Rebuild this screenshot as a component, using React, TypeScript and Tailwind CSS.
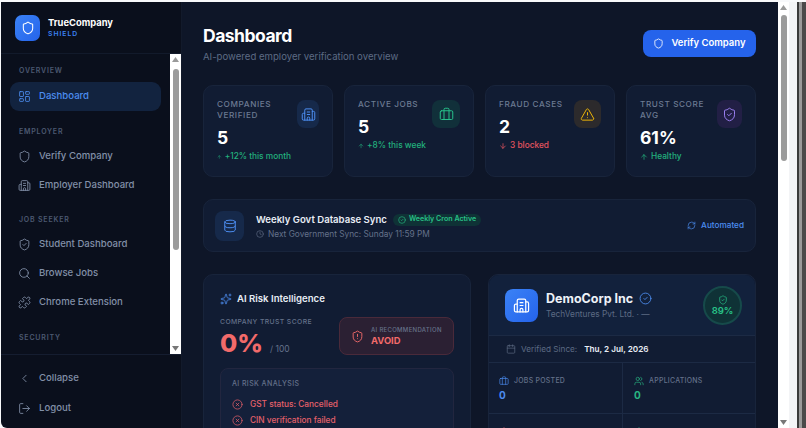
import React from "react";
import {
  ArrowDown,
  ArrowUp,
  Briefcase,
  Building2,
  Calendar,
  ChevronLeft,
  CircleCheck,
  CircleX,
  Clock,
  Database,
  LayoutDashboard,
  LogOut,
  Puzzle,
  RefreshCw,
  Search,
  Shield,
  ShieldAlert,
  ShieldCheck,
  Sparkles,
  TriangleAlert,
  Users,
} from "lucide-react";

const Scrollbar = ({ thumbClass }: { thumbClass: string }) => (
  <div className="flex h-full w-[11px] shrink-0 flex-col items-center bg-white">
    <svg width="9" height="12" viewBox="0 0 9 12" className="shrink-0">
      <path d="M4.5 3 L8 8 L1 8 Z" fill="#9a9a9a" />
    </svg>
    <div className="min-h-0 flex-1">
      <div className={`w-[6px] rounded-full bg-[#9b9b9b] ${thumbClass}`} />
    </div>
    <svg width="9" height="12" viewBox="0 0 9 12" className="shrink-0">
      <path d="M1 4 L8 4 L4.5 9 Z" fill="#777777" />
    </svg>
  </div>
);

const NavLabel = ({ children, className = "" }: { children: React.ReactNode; className?: string }) => (
  <div className={`px-[18px] text-[7px] font-semibold leading-[10px] tracking-[0.8px] text-[#4c5971] ${className}`}>
    {children}
  </div>
);

const NavItem = ({ icon: Icon, label, active = false }: { icon: React.ElementType; label: string; active?: boolean }) => (
  <div
    className={`mx-[9px] flex h-[29px] items-center gap-[8px] rounded-[9px] px-[8px] text-[9.6px] font-medium ${
      active ? "bg-[#12233f] text-[#4c8df0]" : "text-[#8290a8]"
    }`}
  >
    <Icon size={13} strokeWidth={1.6} className="shrink-0" />
    <span>{label}</span>
  </div>
);

const Sidebar = () => (
  <aside className="flex h-full w-[180px] shrink-0 flex-col rounded-bl-[6px] bg-[#0a0f1c]">
    <div className="flex h-[52px] shrink-0 items-center gap-[8px] border-b border-[#121a2b] px-[14px]">
      <div className="flex h-[26px] w-[25px] items-center justify-center rounded-[7px] bg-gradient-to-br from-[#3b82f6] to-[#2563eb]">
        <Shield size={14} strokeWidth={1.8} className="text-white" />
      </div>
      <div>
        <div className="text-[9.4px] font-bold leading-[12px] text-white">TrueCompany</div>
        <div className="text-[6.8px] font-semibold leading-[9px] tracking-[1px] text-[#3b82f6]">SHIELD</div>
      </div>
    </div>
    <div className="flex min-h-0 flex-1">
      <nav className="min-w-0 flex-1 overflow-hidden pt-[12px]">
        <NavLabel>OVERVIEW</NavLabel>
        <div className="mt-[6px]">
          <NavItem icon={LayoutDashboard} label="Dashboard" active />
        </div>
        <NavLabel className="mt-[16px]">EMPLOYER</NavLabel>
        <div className="mt-[5px]">
          <NavItem icon={Shield} label="Verify Company" />
          <NavItem icon={Building2} label="Employer Dashboard" />
        </div>
        <NavLabel className="mt-[15px]">JOB SEEKER</NavLabel>
        <div className="mt-[5px]">
          <NavItem icon={ShieldCheck} label="Student Dashboard" />
          <NavItem icon={Search} label="Browse Jobs" />
          <NavItem icon={Puzzle} label="Chrome Extension" />
        </div>
        <NavLabel className="mt-[16px]">SECURITY</NavLabel>
      </nav>
      <Scrollbar thumbClass="mt-[3px] h-[181px]" />
    </div>
    <div className="h-[74px] shrink-0 border-t border-[#151d30] pt-[9px]">
      <NavItem icon={ChevronLeft} label="Collapse" />
      <div className="h-[1px]" />
      <NavItem icon={LogOut} label="Logout" />
    </div>
  </aside>
);

const stats = [
  { label: "COMPANIES VERIFIED", value: "5", note: "+12% this month", icon: Building2, tone: "w-[22px] bg-[#16294a] text-[#4c8df0]", down: false },
  { label: "ACTIVE JOBS", value: "5", note: "+8% this week", icon: Briefcase, tone: "w-[28px] bg-[#11303a] text-[#27c08a]", down: false },
  { label: "FRAUD CASES", value: "2", note: "3 blocked", icon: TriangleAlert, tone: "w-[27px] bg-[#2c2a2c] text-[#eab308]", down: true },
  { label: "TRUST SCORE AVG", value: "61%", note: "Healthy", icon: ShieldCheck, tone: "w-[25px] bg-[#221f45] text-[#9a7ff0]", down: false },
];

const StatCard = ({ stat }: { stat: (typeof stats)[number] }) => {
  const Icon = stat.icon;
  const Arrow = stat.down ? ArrowDown : ArrowUp;
  return (
    <div className="flex h-[92px] items-start justify-between gap-[6px] rounded-[10px] border border-[#18243b] bg-[#111c33] px-[13px] pt-[13px]">
      <div className="min-w-0">
        <div className="text-[8.2px] font-medium leading-[11px] tracking-[0.6px] text-[#6c7a92]">{stat.label}</div>
        <div className="mt-[6px] text-[17.5px] font-bold leading-[22px] text-white">{stat.value}</div>
        <div className={`mt-[2px] flex items-center gap-[3px] whitespace-nowrap text-[8.3px] font-medium leading-[11px] ${stat.down ? "text-[#e5545f]" : "text-[#22b07d]"}`}>
          <Arrow size={8} strokeWidth={2.2} />
          <span>{stat.note}</span>
        </div>
      </div>
      <div className={`mt-[1px] flex h-[28px] shrink-0 items-center justify-center rounded-[8px] ${stat.tone}`}>
        <Icon size={15} strokeWidth={1.6} />
      </div>
    </div>
  );
};

const SyncCard = () => (
  <div className="mt-[22px] flex h-[53px] shrink-0 items-center justify-between rounded-[10px] border border-[#18243b] bg-[#111c33] px-[11px]">
    <div className="flex items-center gap-[12px]">
      <div className="flex h-[30px] w-[29px] items-center justify-center rounded-[8px] bg-[#16294a] text-[#4c8df0]">
        <Database size={14} strokeWidth={1.7} />
      </div>
      <div className="pt-[1px]">
        <div className="flex items-center gap-[6px]">
          <span className="text-[9.6px] font-semibold leading-[14px] text-[#e8edf5]">Weekly Govt Database Sync</span>
          <span className="flex h-[12px] items-center gap-[3px] rounded-full bg-[#0f3236] px-[5px] text-[7.1px] font-semibold text-[#28c187]">
            <CircleCheck size={8} strokeWidth={1.8} />
            Weekly Cron Active
          </span>
        </div>
        <div className="mt-[1px] flex items-center gap-[4px] text-[8.3px] leading-[12px] text-[#64718a]">
          <Clock size={8} strokeWidth={1.8} />
          Next Government Sync: Sunday 11:59 PM
        </div>
      </div>
    </div>
    <div className="flex items-center gap-[5px] text-[8.2px] font-medium text-[#4c8df0]">
      <RefreshCw size={9} strokeWidth={1.8} />
      Automated
    </div>
  </div>
);

const RiskCard = () => (
  <div className="min-w-0 flex-1 rounded-[10px] border border-[#18243b] bg-[#111c33] px-[16px] pb-[20px] pt-[17px]">
    <div className="flex items-center gap-[5px] text-[9.6px] font-semibold leading-[14px] text-[#e8edf5]">
      <Sparkles size={12} strokeWidth={1.6} className="text-[#4c8df0]" />
      AI Risk Intelligence
    </div>
    <div className="mt-[11px] flex items-start justify-between">
      <div>
        <div className="text-[6.8px] font-medium leading-[10px] tracking-[0.4px] text-[#64718a]">COMPANY TRUST SCORE</div>
        <div className="flex items-baseline gap-[7px]">
          <span className="text-[25px] font-extrabold leading-[32px] text-[#f26a6a]">0%</span>
          <span className="text-[8.5px] text-[#64718a]">/ 100</span>
        </div>
      </div>
      <div className="flex h-[38px] w-[115px] items-center gap-[7px] rounded-[8px] border border-[#4a2a3a] bg-[#2b2033] px-[11px]">
        <ShieldAlert size={13} strokeWidth={1.7} className="shrink-0 text-[#f26a6a]" />
        <div>
          <div className="whitespace-nowrap text-[6px] font-medium leading-[9px] tracking-[0.3px] text-[#66728a]">AI RECOMMENDATION</div>
          <div className="mt-[1px] text-[9.4px] font-bold leading-[12px] text-[#f26a6a]">AVOID</div>
        </div>
      </div>
    </div>
    <div className="mt-[9px] rounded-[8px] border border-[#22263f] bg-[#14203a] px-[11px] pb-[12px] pt-[10px]">
      <div className="text-[7px] font-medium leading-[10px] tracking-[0.4px] text-[#64718a]">AI RISK ANALYSIS</div>
      <div className="mt-[8px] flex items-center gap-[7px] text-[8.3px] font-medium leading-[14px] text-[#e5606a]">
        <CircleX size={11} strokeWidth={1.6} />
        GST status: Cancelled
      </div>
      <div className="mt-[2px] flex items-center gap-[7px] text-[8.3px] font-medium leading-[14px] text-[#e5606a]">
        <CircleX size={11} strokeWidth={1.6} />
        CIN verification failed
      </div>
    </div>
  </div>
);

const Metric = ({ icon: Icon, label, value, tone, border = false }: { icon: React.ElementType; label: string; value: string; tone: string; border?: boolean }) => (
  <div className={`h-[50px] px-[10px] pt-[13px] ${border ? "border-l border-[#1c2a44] pl-[11px]" : ""}`}>
    <div className="flex items-center gap-[5px] text-[6.9px] font-medium leading-[10px] tracking-[0.3px] text-[#64718a]">
      <Icon size={10} strokeWidth={1.6} className={tone} />
      {label}
    </div>
    <div className={`mt-[2px] text-[10px] font-bold leading-[14px] ${tone}`}>{value}</div>
  </div>
);

const CompanyCard = () => (
  <div className="w-[268px] shrink-0 rounded-[10px] border border-[#18243b] bg-[#111c33]">
    <div className="flex h-[60px] items-center justify-between rounded-t-[10px] bg-[#12213c] pl-[16px] pr-[13px]">
      <div className="flex items-center gap-[8px]">
        <div className="flex h-[33px] w-[33px] items-center justify-center rounded-[8px] bg-gradient-to-br from-[#3b82f6] to-[#2563eb] text-white">
          <Building2 size={17} strokeWidth={1.7} />
        </div>
        <div>
          <div className="flex items-center gap-[6px] text-[12.5px] font-bold leading-[16px] text-[#eef2f8]">
            DemoCorp Inc
            <CircleCheck size={13} strokeWidth={1.6} className="text-[#4c8df0]" />
          </div>
          <div className="mt-[1px] text-[8.3px] leading-[12px] text-[#5d6b84]">TechVentures Pvt. Ltd. · —</div>
        </div>
      </div>
      <div className="flex h-[39px] w-[39px] flex-col items-center justify-center rounded-full border-2 border-[#164a4a] bg-[#0f3236] text-[#28c187]">
        <ShieldCheck size={10} strokeWidth={1.7} />
        <div className="text-[9.5px] font-semibold leading-[11px]">89%</div>
      </div>
    </div>
    <div className="flex h-[28px] items-center gap-[5px] border-y border-[#1c2a44] pl-[17px] text-[8.2px]">
      <Calendar size={10} strokeWidth={1.6} className="text-[#5d6b84]" />
      <span className="mr-[2px] text-[#5d6b84]">Verified Since:</span>
      <span className="font-semibold text-[#e8edf5]">Thu, 2 Jul, 2026</span>
    </div>
    <div className="grid grid-cols-2">
      <Metric icon={Briefcase} label="JOBS POSTED" value="0" tone="text-[#4c8df0]" />
      <Metric icon={Users} label="APPLICATIONS" value="0" tone="text-[#28b582]" border />
    </div>
    <div className="grid grid-cols-2 border-t border-[#1c2a44]">
      <Metric icon={ShieldAlert} label="FRAUD REPORTS" value="0" tone="text-[#e5606a]" />
      <Metric icon={ShieldCheck} label="VERIFICATION" value="0" tone="text-[#28b582]" border />
    </div>
  </div>
);

const App: React.FC = () => {
  return (
    <div className="flex h-[428px] w-[806px] overflow-hidden bg-[#f8f9fb] pl-[1px] pt-[2px] font-[Inter,sans-serif]">
      <Sidebar />
      <main className="h-full w-[597px] shrink-0 overflow-hidden border-l border-[#121a2b] bg-[#0e1628] pl-[21px] pr-[22px]">
        <div className="flex items-start justify-between pt-[22px]">
          <div>
            <h1 className="text-[17.5px] font-bold leading-[24px] tracking-[-0.5px] text-white">Dashboard</h1>
            <p className="mt-[2px] text-[9.6px] leading-[14px] text-[#5d6b84]">AI-powered employer verification overview</p>
          </div>
          <button className="mt-[6px] flex h-[27px] w-[113px] items-center justify-center gap-[7px] rounded-[8px] bg-[#2563eb] text-[9.5px] font-semibold text-white">
            <Shield size={11} strokeWidth={1.8} />
            Verify Company
          </button>
        </div>
        <div className="mt-[21px] grid grid-cols-4 gap-[11px]">
          {stats.map((stat) => (
            <StatCard key={stat.label} stat={stat} />
          ))}
        </div>
        <SyncCard />
        <div className="mt-[22px] flex items-start gap-[17px]">
          <RiskCard />
          <CompanyCard />
        </div>
      </main>
      <Scrollbar thumbClass="mt-[1px] h-[146px]" />
      <div className="h-full w-[8px] shrink-0 bg-[#f3f4f6]" />
      <div className="h-full w-[2px] shrink-0 bg-[#3a3a3a]" />
      <div className="h-full w-[3px] shrink-0 bg-[#9a9a9a]" />
      <div className="h-full flex-1 bg-[#4a4a4a]" />
    </div>
  );
};

export default App;
